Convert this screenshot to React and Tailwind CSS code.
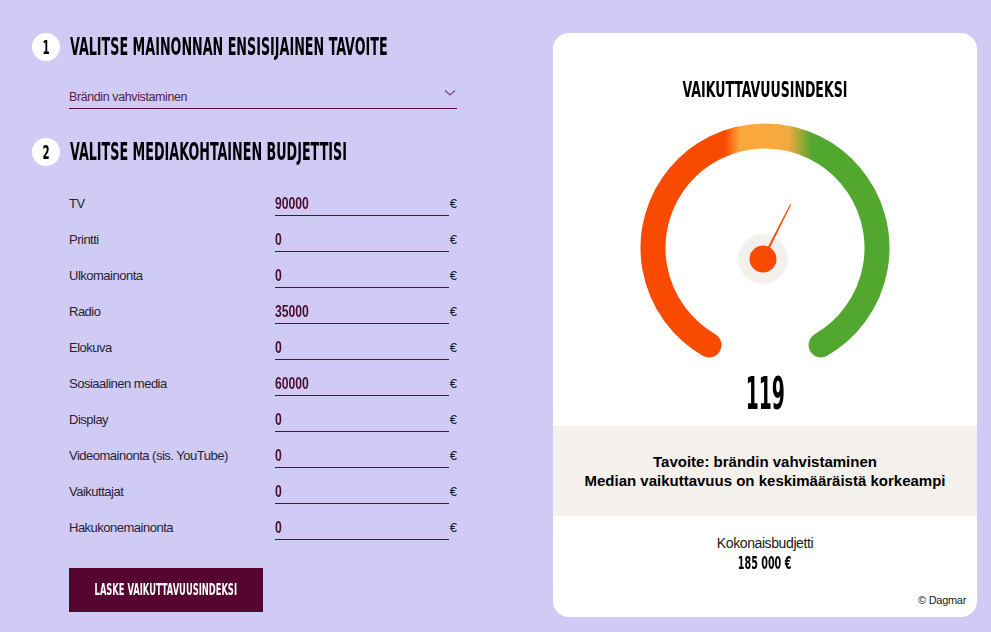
const rows = [
  ["TV", "90000"],
  ["Printti", "0"],
  ["Ulkomainonta", "0"],
  ["Radio", "35000"],
  ["Elokuva", "0"],
  ["Sosiaalinen media", "60000"],
  ["Display", "0"],
  ["Videomainonta (sis. YouTube)", "0"],
  ["Vaikuttajat", "0"],
  ["Hakukonemainonta", "0"],
];

const cond = { fontFamily: '"DejaVu Sans Condensed", "Liberation Sans Narrow", sans-serif' };
const narrow = { fontFamily: '"Liberation Sans", Arial, sans-serif' };

function Step({ n, children }) {
  return (
    <div className="flex items-center h-[28px]">
      <div className="shrink-0 w-[28px] h-[28px] rounded-full bg-white flex items-center justify-center text-[19px] font-bold text-black" style={cond}>
        <span className="inline-block scale-x-[0.6]">{n}</span>
      </div>
      <div className="ml-[10px] text-[24px] font-bold text-black leading-[28px] whitespace-nowrap" style={cond}>
        <span className="inline-block scale-x-[0.59] origin-left">{children}</span>
      </div>
    </div>
  );
}

function Gauge() {
  return (
    <svg width="260" height="242" viewBox="0 0 260 242" className="mt-[16px]">
      <defs>
        <linearGradient id="arc" gradientUnits="userSpaceOnUse" x1="0" y1="0" x2="260" y2="0">
          <stop offset="0.345" stopColor="#f84a00" />
          <stop offset="0.405" stopColor="#fda83b" />
          <stop offset="0.59" stopColor="#f2aa40" />
          <stop offset="0.68" stopColor="#52a72e" />
        </linearGradient>
        <filter id="sh" x="-50%" y="-50%" width="200%" height="200%">
          <feDropShadow dx="0" dy="0" stdDeviation="1.5" floodColor="#000" floodOpacity="0.12" />
        </filter>
      </defs>
      <path d="M 74 227 A 112 112 0 1 1 186 227" fill="none" stroke="url(#arc)" strokeWidth="25" strokeLinecap="round" />
      <circle cx="128" cy="141" r="24" fill="#f3f0eb" filter="url(#sh)" />
      <polygon points="126.2,141.9 129.8,140.1 156.2,86.6 155.2,86.0" fill="#f84a00" />
      <circle cx="128" cy="141" r="13.5" fill="#f84a00" />
    </svg>
  );
}

export default function App() {
  return (
    <div className="w-[991px] h-[632px] bg-[#cfcbf4] flex overflow-hidden" style={{ fontFamily: '"Liberation Sans", Arial, sans-serif' }}>
      <div className="w-[425px] shrink-0 ml-[32px] pt-[33px] flex flex-col">
        <Step n="1">VALITSE MAINONNAN ENSISIJAINEN TAVOITE</Step>
        <div className="ml-[37px] mt-[23px] h-[25px] border-b border-[#5a0a36] flex items-end justify-between pb-[3px]">
          <span className="text-[12.5px] leading-[16px] text-[#5b1c44] tracking-[-0.4px]">Brändin vahvistaminen</span>
          <svg width="12" height="8" viewBox="0 0 12 8" className="mr-[1px] mb-[8px]">
            <path d="M1 1.5 L6 6 L11 1.5" fill="none" stroke="#7b4a73" strokeWidth="1.3" />
          </svg>
        </div>
        <div className="mt-[29px]">
          <Step n="2">VALITSE MEDIAKOHTAINEN BUDJETTISI</Step>
        </div>
        <div className="ml-[37px] mt-[20px] flex flex-col">
          {rows.map(([label, value]) => (
            <div key={label} className="h-[36px] flex items-center">
              <div className="w-[206px] text-[13px] text-[#2a1f33] tracking-[-0.5px]">{label}</div>
              <div className="w-[174px] h-[24px] border-b border-[#5a0a36] flex items-center">
                <span className="text-[16px] font-bold text-[#4c0d2f] inline-block scale-x-[0.76] origin-left" style={narrow}>{value}</span>
              </div>
              <div className="ml-[1px] text-[13px] text-[#1a1a1a]">€</div>
            </div>
          ))}
        </div>
        <button className="ml-[37px] mt-[22px] w-[194px] h-[44px] bg-[#560530] text-white flex items-center justify-center">
          <span className="text-[16px] font-bold inline-block scale-x-[0.58] whitespace-nowrap" style={cond}>LASKE VAIKUTTAVUUSINDEKSI</span>
        </button>
      </div>

      <div className="shrink-0 ml-[96px] mt-[33px] w-[424px] h-[584px] bg-white rounded-[16px] flex flex-col items-center pt-[45px] overflow-hidden">
        <div className="h-[24px] leading-[24px] text-[21px] font-bold text-black whitespace-nowrap" style={cond}>
          <span className="inline-block scale-x-[0.665]">VAIKUTTAVUUSINDEKSI</span>
        </div>
        <Gauge />
        <div className="mt-[12px] h-[44px] leading-[44px] text-[44px] font-bold text-black" style={cond}>
          <span className="inline-block scale-x-[0.475]">119</span>
        </div>
        <div className="mt-[10px] w-full h-[90px] bg-[#f4f1ec] flex flex-col items-center justify-center text-[15px] font-bold text-black leading-[19px]">
          <div>Tavoite: brändin vahvistaminen</div>
          <div>Median vaikuttavuus on keskimääräistä korkeampi</div>
        </div>
        <div className="mt-[17px] h-[20px] leading-[20px] text-[14px] text-[#1a1a1a] tracking-[-0.4px]">Kokonaisbudjetti</div>
        <div className="h-[20px] leading-[20px] text-[17px] font-bold text-black whitespace-nowrap" style={cond}>
          <span className="inline-block scale-x-[0.63]">185 000 €</span>
        </div>
        <div className="mt-[19px] h-[16px] leading-[16px] self-end pr-[11px] text-[11px] text-[#1a1a1a] tracking-[-0.3px]">© Dagmar</div>
      </div>
    </div>
  );
}
